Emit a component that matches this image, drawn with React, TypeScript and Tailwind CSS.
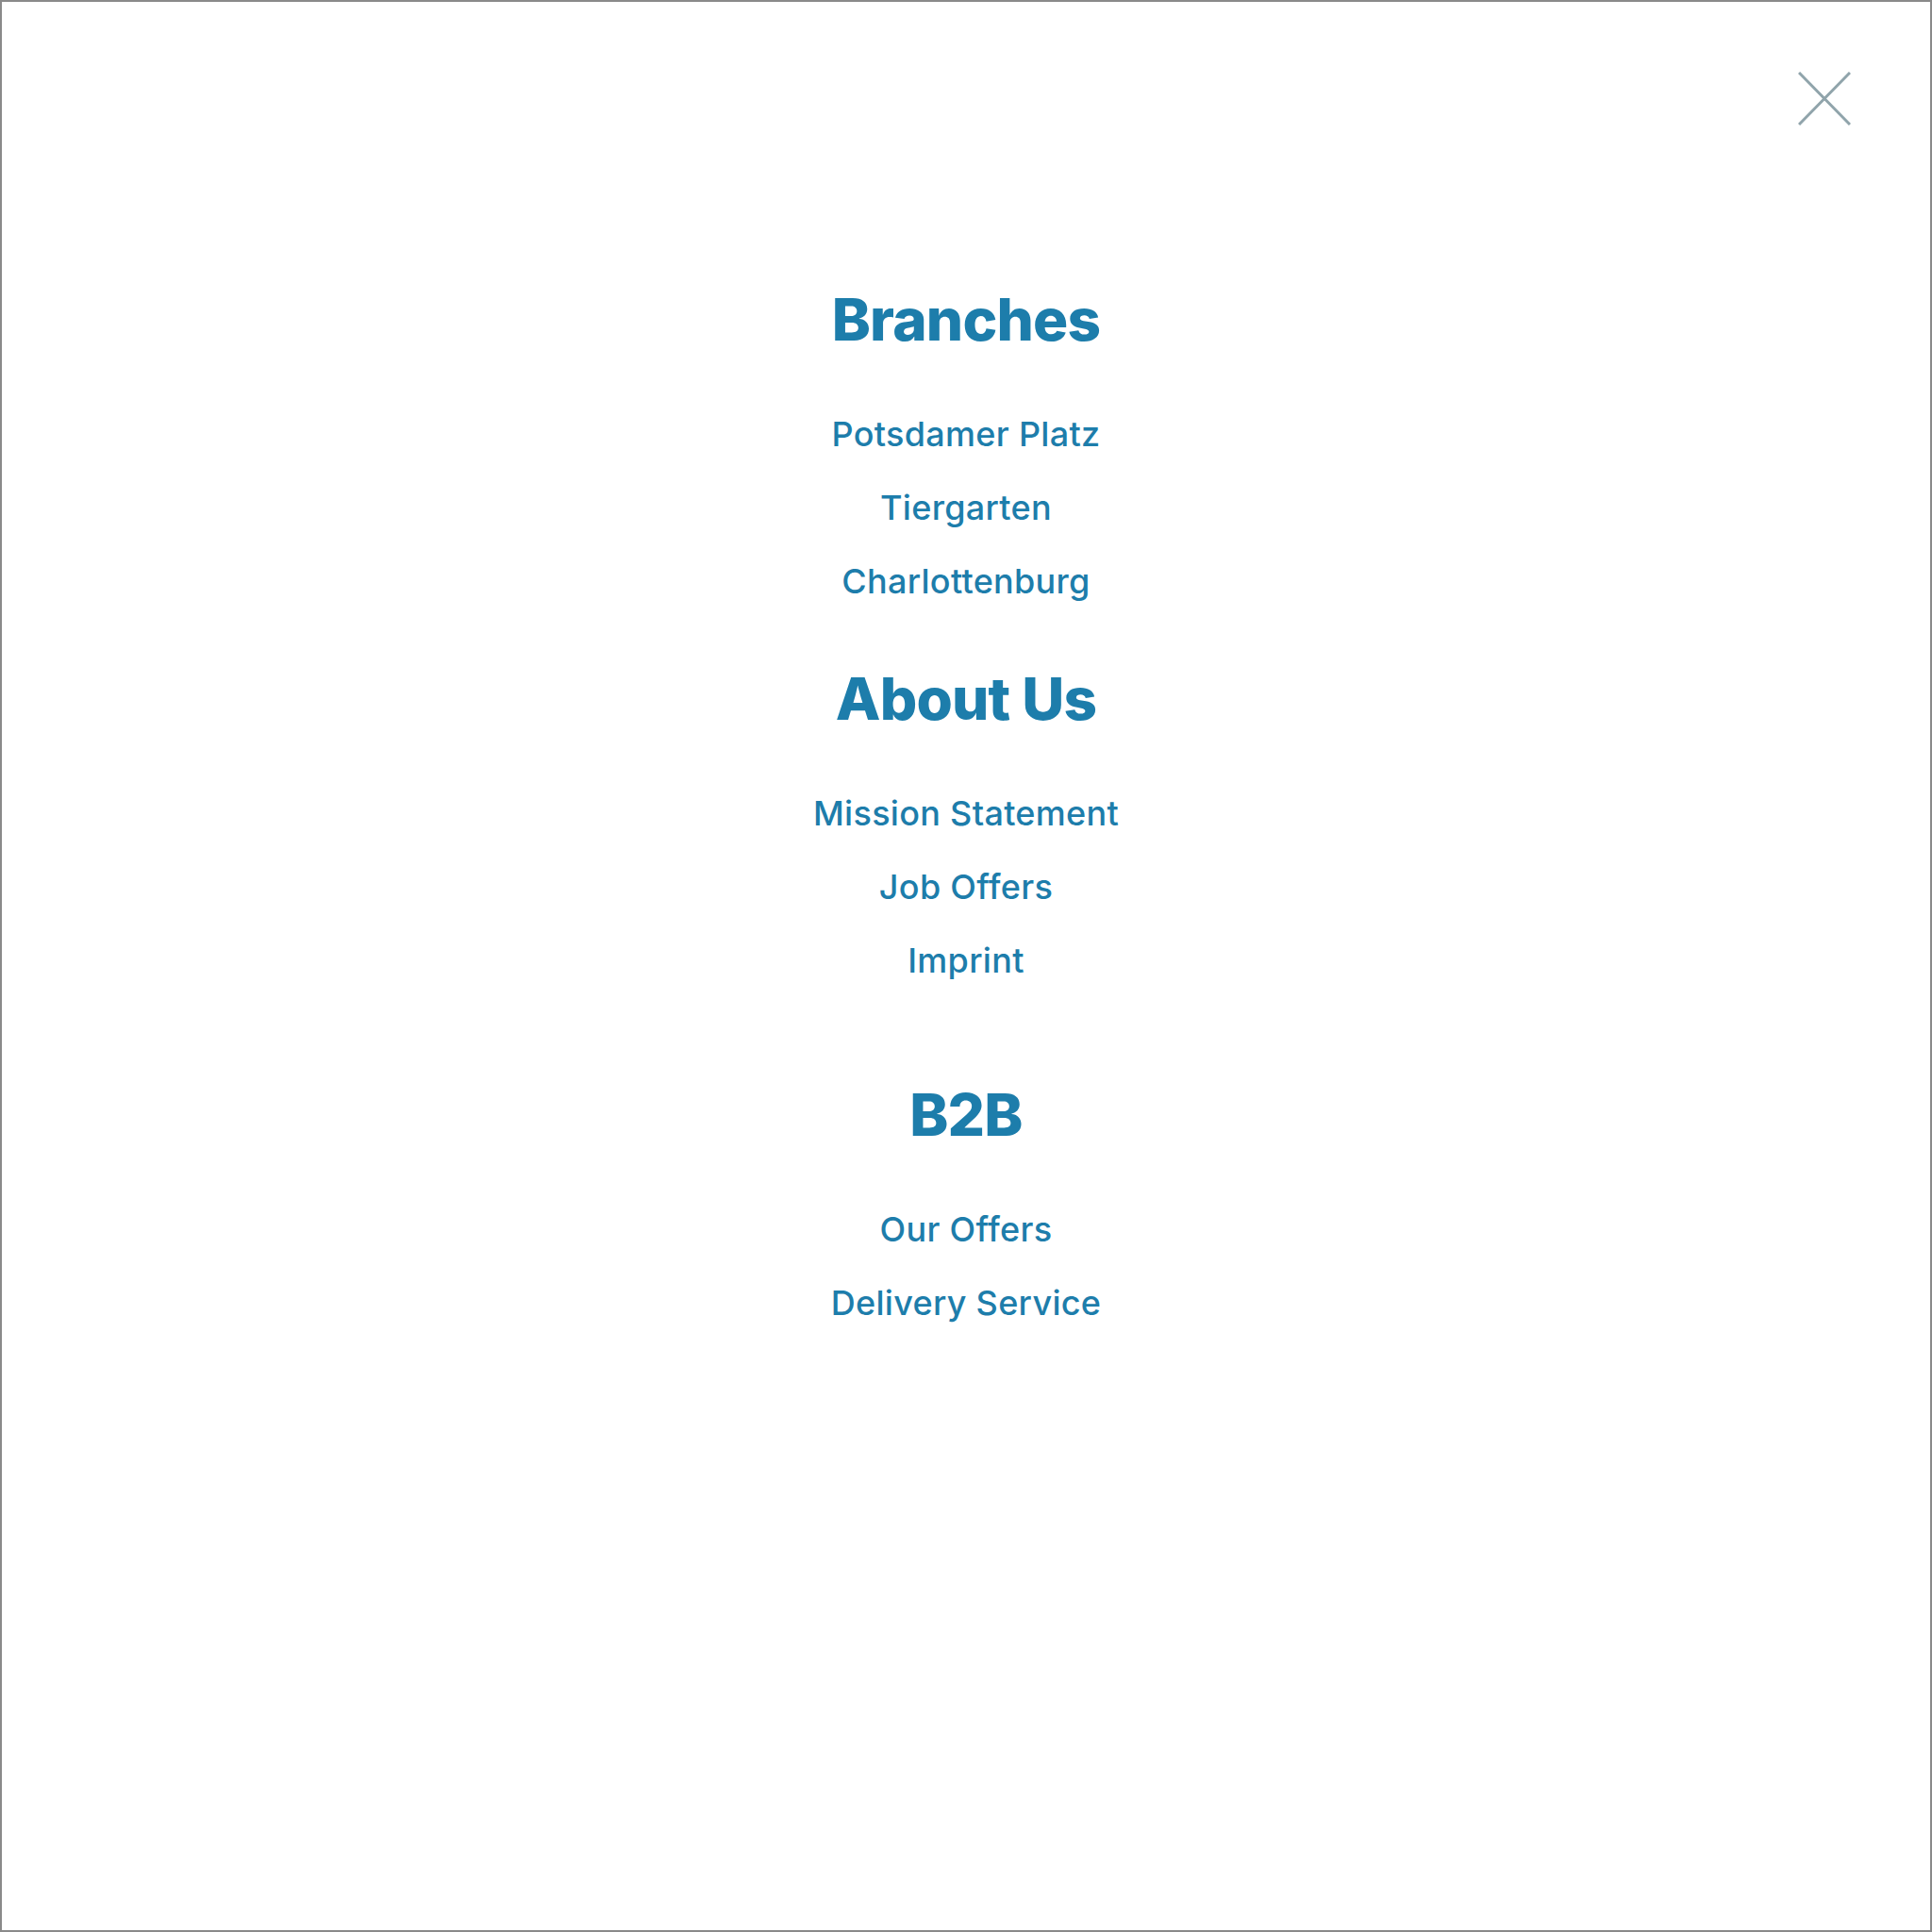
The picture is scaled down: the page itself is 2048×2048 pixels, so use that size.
import React from 'react';

const sections = [
  { title: 'Branches', links: ['Potsdamer Platz', 'Tiergarten', 'Charlottenburg'], gap: 'mt-0' },
  { title: 'About Us', links: ['Mission Statement', 'Job Offers', 'Imprint'], gap: 'mt-[54px]' },
  { title: 'B2B', links: ['Our Offers', 'Delivery Service'], gap: 'mt-[93px]' },
];

const CloseIcon: React.FC = () => (
  <svg width="56" height="57" viewBox="0 0 56 57" fill="none">
    <path d="M1 1L55 56M55 1L1 56" stroke="#90a4ab" strokeWidth="3" />
  </svg>
);

const App: React.FC = () => {
  return (
    <div className="w-[2048px] h-[2048px] bg-white border-2 border-[#8a8a8a] font-['Inter','Noto_Sans',sans-serif] text-[#1d7dab]">
      <div className="flex justify-end pt-[74px] pr-[84px]">
        <button className="p-0 leading-none">
          <CloseIcon />
        </button>
      </div>
      <nav className="flex flex-col items-center pt-[175px]">
        {sections.map((s) => (
          <div key={s.title} className={`flex flex-col items-center ${s.gap}`}>
            <h2 className="text-[62px] leading-[62px] font-extrabold tracking-[-0.8px] mb-[52px]">{s.title}</h2>
            <ul className="flex flex-col items-center">
              {s.links.map((l) => (
                <li key={l} className="text-[36px] leading-[78px] font-medium tracking-[0.3px] -mt-[1px] mb-[1px]">
                  <a href="#">{l}</a>
                </li>
              ))}
            </ul>
          </div>
        ))}
      </nav>
    </div>
  );
};

export default App;
